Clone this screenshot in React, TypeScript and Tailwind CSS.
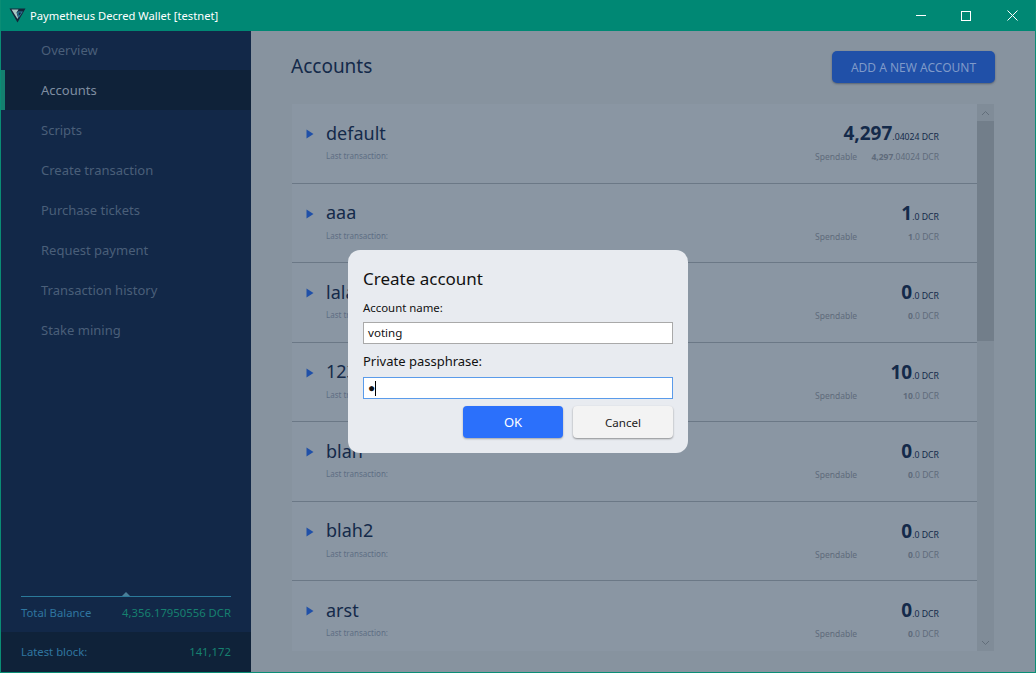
import React from "react";

const nav = ["Overview", "Accounts", "Scripts", "Create transaction", "Purchase tickets", "Request payment", "Transaction history", "Stake mining"];
const rows = [
  { name: "default", big: "4,297", frac: ".04024 DCR", sb: "4,297", sf: ".04024 DCR" },
  { name: "aaa", big: "1", frac: ".0 DCR", sb: "1", sf: ".0 DCR" },
  { name: "lala", big: "0", frac: ".0 DCR", sb: "0", sf: ".0 DCR" },
  { name: "1234", big: "10", frac: ".0 DCR", sb: "10", sf: ".0 DCR" },
  { name: "blah", big: "0", frac: ".0 DCR", sb: "0", sf: ".0 DCR" },
  { name: "blah2", big: "0", frac: ".0 DCR", sb: "0", sf: ".0 DCR" },
  { name: "arst", big: "0", frac: ".0 DCR", sb: "0", sf: ".0 DCR" },
];

export default function App() {
  return (
    <div className="relative flex h-[673px] w-[1036px] flex-col overflow-hidden border border-t-0 border-[#0a8d75] bg-[#87939f] font-['Noto_Sans','Open_Sans',sans-serif]">
      <header className="flex h-[31px] shrink-0 items-center bg-[#008874] pl-[8px] text-white">
        <svg width="17" height="15" viewBox="0 0 17 15" className="shrink-0">
          <path d="M0.5 0.5H16.5L8.5 14.5Z" fill="#14263a" />
          <path d="M2.5 1.5H9.5L7.5 4.5L9 9.5L8.5 11Z" fill="#a9c9c4" />
          <path d="M9 3.5H14L9.5 10L8 5Z" fill="#2f7f9f" />
          <path d="M9.5 4.5H12.5L9.8 8Z" fill="#14263a" />
        </svg>
        <span className="ml-[4px] text-[11.2px] leading-none">Paymetheus Decred Wallet [testnet]</span>
        <div className="ml-auto flex items-center">
          <div className="flex h-[31px] w-[45px] items-center justify-center"><div className="h-px w-[10px] bg-white" /></div>
          <div className="flex h-[31px] w-[46px] items-center justify-center"><div className="h-[10px] w-[10px] border border-white" /></div>
          <div className="flex h-[31px] w-[46px] items-center justify-center">
            <svg width="11" height="11" viewBox="0 0 11 11"><path d="M0.5 0.5L10.5 10.5M10.5 0.5L0.5 10.5" stroke="#fff" strokeWidth="1" /></svg>
          </div>
        </div>
      </header>
      <div className="flex min-h-0 flex-1">
        <aside className="flex w-[250px] shrink-0 flex-col bg-[#122848] text-[13px]">
          <nav className="mt-[-1px] flex flex-col">
            {nav.map((n) => (
              <div key={n} className={n === "Accounts"
                ? "flex h-[40px] items-center border-l-4 border-[#14806f] bg-[#0f2239] pl-[36px] pt-[2px] text-[#7f8ea1]"
                : "flex h-[40px] items-center pl-[40px] pt-[2px] text-[#4a5f79]"}>{n}</div>
            ))}
          </nav>
          <div className="mt-auto px-[20px]">
            <div className="relative h-px bg-[#2b7a9a]">
              <div className="absolute left-[101px] top-[-4px] h-0 w-0 border-x-[4px] border-b-[4px] border-x-transparent border-b-[#4a7f98]" />
            </div>
            <div className="flex h-[33px] items-center justify-between text-[11.3px]">
              <span className="text-[#2f76a0]">Total Balance</span>
              <span className="text-[#16806f]">4,356.17950556 DCR</span>
            </div>
          </div>
          <div className="mt-[2px] flex h-[40px] items-center justify-between bg-[#0f2239] px-[20px] pt-[1px] text-[11.3px]">
            <span className="text-[#2f76a0]">Latest block:</span>
            <span className="text-[#16806f]">141,172</span>
          </div>
        </aside>
        <main className="flex min-w-0 flex-1 flex-col pl-[41px] pr-[41px]">
          <div className="flex h-[73px] shrink-0 items-start justify-between pt-[20px]">
            <h1 className="ml-[-1px] mt-[2px] text-[19px] leading-[26px] text-[#142a4a]">Accounts</h1>
            <button className="mr-[-1px] h-[32px] w-[163px] rounded-[5px] bg-[#2050a8] pt-[1px] text-[12px] text-[#7f9ac9] shadow-[0_1px_2px_rgba(40,50,70,0.5)]">ADD A NEW ACCOUNT</button>
          </div>
          <div className="flex h-[547px] shrink-0 bg-[#8a96a3]">
            <div className="min-w-0 flex-1">
              {rows.map((r, i) => (
                <div key={r.name} className={i === 6 ? "flex h-[70px] justify-between" : "flex h-[79.5px] justify-between border-b border-[#6b7886]"}>
                  <div className="flex items-start pl-[14px] pt-[16px]">
                    <svg width="8" height="10" viewBox="0 0 8 10" className="mt-[9px]"><path d="M0.5 0.5V9.5L7.5 5Z" fill="#2050a8" /></svg>
                    <div className="ml-[12px]">
                      <div className="mt-[-0.5px] text-[18px] leading-[26px] text-[#142a4a]">{r.name}</div>
                      <div className="mt-[4.5px] text-[8px] leading-[11px] text-[#5e6e83]">Last transaction:</div>
                    </div>
                  </div>
                  <div className="flex w-[240px] flex-col items-end pr-[38px] pt-[16px]">
                    <div className="leading-[26px] text-[#142a4a]">
                      <span className="text-[19px] font-bold">{r.big}</span><span className="text-[8.7px]">{r.frac}</span>
                    </div>
                    <div className="mt-[1px] flex w-[124px] justify-between text-[8.5px] leading-[11px] text-[#5f6b7b]">
                      <span>Spendable</span>
                      <span><b>{r.sb}</b>{r.sf}</span>
                    </div>
                  </div>
                </div>
              ))}
            </div>
            <div className="flex w-[17px] shrink-0 flex-col bg-[#808c98]">
              <div className="flex h-[17px] items-center justify-center">
                <svg width="9" height="6" viewBox="0 0 9 6"><path d="M1 5L4.5 1.5L8 5" fill="none" stroke="#626e7a" /></svg>
              </div>
              <div className="h-[220px] bg-[#727e8a]" />
              <div className="mt-auto flex h-[17px] items-center justify-center">
                <svg width="9" height="6" viewBox="0 0 9 6"><path d="M1 1L4.5 4.5L8 1" fill="none" stroke="#626e7a" /></svg>
              </div>
            </div>
          </div>
        </main>
      </div>
      <div className="absolute inset-x-0 bottom-0 top-[31px] flex items-center justify-center">
        <div className="flex h-[203px] w-[340px] flex-col rounded-[12px] bg-[#e8ebf0] px-[15px] text-[#111]">
          <div className="mt-[16px] text-[17px] leading-[26px]">Create account</div>
          <label className="mt-[8px] text-[11.4px] leading-[16px]">Account name:</label>
          <div className="mt-[6px] flex h-[22px] items-center border border-[#a9a9a9] bg-white pl-[4px] text-[11.6px]">voting</div>
          <label className="mt-[8px] text-[13px] leading-[18px]">Private passphrase:</label>
          <div className="mt-[7px] flex h-[22px] items-center border border-[#5a9bea] bg-white pl-[4px] text-[12px]">
            <span className="text-[12px] leading-none">●</span><span className="h-[15px] w-px bg-black" />
          </div>
          <div className="mt-[7px] flex justify-end gap-[10px]">
            <button className="h-[32px] w-[100px] rounded-[4px] bg-[#2b70fb] pt-[1px] text-[13px] text-white shadow-[0_1px_2px_rgba(0,0,0,0.3)]">OK</button>
            <button className="h-[32px] w-[100px] rounded-[4px] bg-[#f3f3f3] pt-[1px] text-[11.6px] text-[#222] shadow-[0_1px_2px_rgba(0,0,0,0.4)]">Cancel</button>
          </div>
        </div>
      </div>
    </div>
  );
}
